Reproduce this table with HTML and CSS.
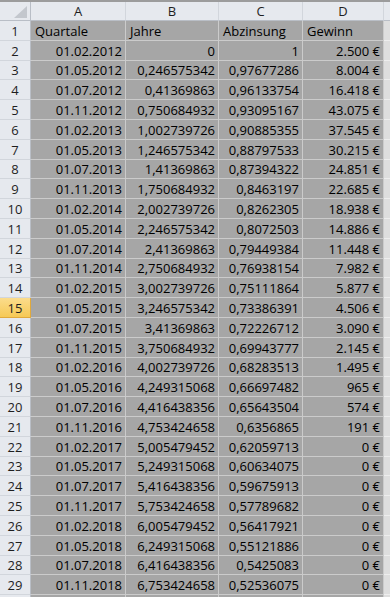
FILE: index.html
```html
<!DOCTYPE html>
<html lang="de">
<head>
<meta charset="utf-8">
<title>Tabelle</title>
<link rel="stylesheet" href="styles.css">
</head>
<body>
<div class="topband"></div>
<div class="sheet">
  <div class="hd corner"><svg class="tri" width="13" height="12" viewBox="0 0 13 12"><polygon points="0,12 13,12 13,0" fill="#c3c7cd"/></svg></div>
  <div class="hd col">A</div><div class="hd col">B</div><div class="hd col">C</div><div class="hd col">D</div><div class="hd col ecol"></div>

  <div class="rh">1</div><div class="c">Quartale</div><div class="c">Jahre</div><div class="c">Abzinsung</div><div class="c">Gewinn</div><div class="e"></div>
  <div class="rh">2</div><div class="c r">01.02.2012</div><div class="c r">0</div><div class="c r">1</div><div class="c r">2.500 €</div><div class="e"></div>
  <div class="rh">3</div><div class="c r">01.05.2012</div><div class="c r">0,246575342</div><div class="c r">0,97677286</div><div class="c r">8.004 €</div><div class="e"></div>
  <div class="rh">4</div><div class="c r">01.07.2012</div><div class="c r">0,41369863</div><div class="c r">0,96133754</div><div class="c r">16.418 €</div><div class="e"></div>
  <div class="rh">5</div><div class="c r">01.11.2012</div><div class="c r">0,750684932</div><div class="c r">0,93095167</div><div class="c r">43.075 €</div><div class="e"></div>
  <div class="rh">6</div><div class="c r">01.02.2013</div><div class="c r">1,002739726</div><div class="c r">0,90885355</div><div class="c r">37.545 €</div><div class="e"></div>
  <div class="rh">7</div><div class="c r">01.05.2013</div><div class="c r">1,246575342</div><div class="c r">0,88797533</div><div class="c r">30.215 €</div><div class="e"></div>
  <div class="rh">8</div><div class="c r">01.07.2013</div><div class="c r">1,41369863</div><div class="c r">0,87394322</div><div class="c r">24.851 €</div><div class="e"></div>
  <div class="rh">9</div><div class="c r">01.11.2013</div><div class="c r">1,750684932</div><div class="c r">0,8463197</div><div class="c r">22.685 €</div><div class="e"></div>
  <div class="rh">10</div><div class="c r">01.02.2014</div><div class="c r">2,002739726</div><div class="c r">0,8262305</div><div class="c r">18.938 €</div><div class="e"></div>
  <div class="rh">11</div><div class="c r">01.05.2014</div><div class="c r">2,246575342</div><div class="c r">0,8072503</div><div class="c r">14.886 €</div><div class="e"></div>
  <div class="rh">12</div><div class="c r">01.07.2014</div><div class="c r">2,41369863</div><div class="c r">0,79449384</div><div class="c r">11.448 €</div><div class="e"></div>
  <div class="rh">13</div><div class="c r">01.11.2014</div><div class="c r">2,750684932</div><div class="c r">0,76938154</div><div class="c r">7.982 €</div><div class="e"></div>
  <div class="rh">14</div><div class="c r">01.02.2015</div><div class="c r">3,002739726</div><div class="c r">0,75111864</div><div class="c r">5.877 €</div><div class="e"></div>
  <div class="rh active">15</div><div class="c r">01.05.2015</div><div class="c r">3,246575342</div><div class="c r">0,73386391</div><div class="c r">4.506 €</div><div class="e"></div>
  <div class="rh">16</div><div class="c r">01.07.2015</div><div class="c r">3,41369863</div><div class="c r">0,72226712</div><div class="c r">3.090 €</div><div class="e"></div>
  <div class="rh">17</div><div class="c r">01.11.2015</div><div class="c r">3,750684932</div><div class="c r">0,69943777</div><div class="c r">2.145 €</div><div class="e"></div>
  <div class="rh">18</div><div class="c r">01.02.2016</div><div class="c r">4,002739726</div><div class="c r">0,68283513</div><div class="c r">1.495 €</div><div class="e"></div>
  <div class="rh">19</div><div class="c r">01.05.2016</div><div class="c r">4,249315068</div><div class="c r">0,66697482</div><div class="c r">965 €</div><div class="e"></div>
  <div class="rh">20</div><div class="c r">01.07.2016</div><div class="c r">4,416438356</div><div class="c r">0,65643504</div><div class="c r">574 €</div><div class="e"></div>
  <div class="rh">21</div><div class="c r">01.11.2016</div><div class="c r">4,753424658</div><div class="c r">0,6356865</div><div class="c r">191 €</div><div class="e"></div>
  <div class="rh">22</div><div class="c r">01.02.2017</div><div class="c r">5,005479452</div><div class="c r">0,62059713</div><div class="c r">0 €</div><div class="e"></div>
  <div class="rh">23</div><div class="c r">01.05.2017</div><div class="c r">5,249315068</div><div class="c r">0,60634075</div><div class="c r">0 €</div><div class="e"></div>
  <div class="rh">24</div><div class="c r">01.07.2017</div><div class="c r">5,416438356</div><div class="c r">0,59675913</div><div class="c r">0 €</div><div class="e"></div>
  <div class="rh">25</div><div class="c r">01.11.2017</div><div class="c r">5,753424658</div><div class="c r">0,57789682</div><div class="c r">0 €</div><div class="e"></div>
  <div class="rh">26</div><div class="c r">01.02.2018</div><div class="c r">6,005479452</div><div class="c r">0,56417921</div><div class="c r">0 €</div><div class="e"></div>
  <div class="rh">27</div><div class="c r">01.05.2018</div><div class="c r">6,249315068</div><div class="c r">0,55121886</div><div class="c r">0 €</div><div class="e"></div>
  <div class="rh">28</div><div class="c r">01.07.2018</div><div class="c r">6,416438356</div><div class="c r">0,5425083</div><div class="c r">0 €</div><div class="e"></div>
  <div class="rh">29</div><div class="c r">01.11.2018</div><div class="c r">6,753424658</div><div class="c r">0,52536075</div><div class="c r">0 €</div><div class="e"></div>
  <div class="rh"></div><div class="c r"></div><div class="c r"></div><div class="c r"></div><div class="c r"></div><div class="e"></div>
</div>
</body>
</html>
```

FILE: styles.css
```css
html, body {
  margin: 0;
  padding: 0;
  height: 100%;
  overflow: hidden;
  background: #ffffff;
}

body {
  font-family: "Open Sans", "Liberation Sans", sans-serif;
  font-size: 13px;
  color: #000000;
}

.topband {
  height: 2px;
  background: #9c9c9c;
}

.sheet {
  display: grid;
  grid-template-columns: 31px 95px 93px 84px 81px 1fr;
  grid-template-rows: 19px;
  grid-auto-rows: 19.8px;
}

.hd {
  box-sizing: border-box;
  background: #e6e9ee;
  border-right: 1px solid #d2d6dc;
  border-bottom: 1px solid #b9bec6;
  display: flex;
  align-items: flex-end;
  justify-content: center;
  line-height: 17px;
  color: #1e1e1e;
}

.corner {
  border-right: 1px solid #b9bec6;
  position: relative;
}

.tri {
  position: absolute;
  right: 3px;
  bottom: 2px;
}

.ecol {
  border-right: none;
}

.rh {
  box-sizing: border-box;
  background: #e6e9ee;
  border-right: 1px solid #b9bec6;
  border-bottom: 1px solid #d2d6dc;
  display: flex;
  align-items: flex-end;
  justify-content: center;
  line-height: 17px;
  color: #1e1e1e;
}

.rh.active {
  background: linear-gradient(#fbdc8c, #f6c956);
  border-bottom: 1px solid #e0a93c;
  border-right: 1px solid #e0a93c;
}

.c {
  box-sizing: border-box;
  background: #a6a6a6;
  border-right: 1px solid #cbcbcb;
  border-bottom: 1px solid #cbcbcb;
  display: flex;
  align-items: flex-end;
  padding: 0 3px 0 4px;
  line-height: 17px;
  white-space: nowrap;
  overflow: hidden;
}

.c.r {
  justify-content: flex-end;
}

.e {
  box-sizing: border-box;
  background: #dedede;
  border-bottom: 1px solid #eeeeee;
}
```
